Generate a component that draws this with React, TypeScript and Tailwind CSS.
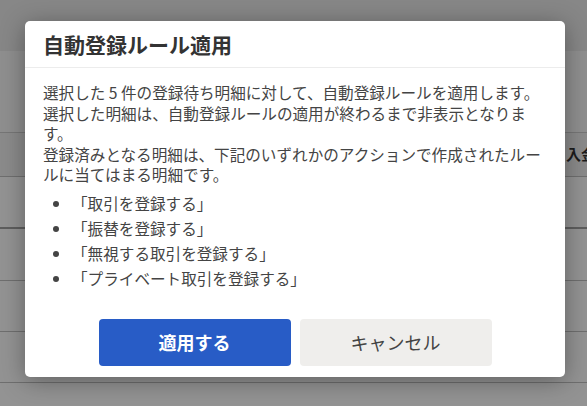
const bullets = [
  "「取引を登録する」",
  "「振替を登録する」",
  "「無視する取引を登録する」",
  "「プライベート取引を登録する」",
];

function BackgroundTable() {
  return (
    <div className="flex flex-col w-full">
      <div className="h-[51px] bg-[#878787]" />
      <div className="h-[82px] bg-[#8f8f8f] border-b border-[#767676]" />
      <div className="h-[44px] bg-[#8b8b8b] border-b border-[#6f6f6f] flex items-center overflow-hidden">
        <div className="w-[566px] shrink-0" />
        <span className="whitespace-nowrap text-[15px] font-bold text-[#1c1c1c]">入金</span>
      </div>
      <div className="h-[52px] bg-[#939393] border-b-2 border-[#5e5e5e]" />
      <div className="h-[52px] bg-[#939393] border-b border-[#6f6f6f]" />
      <div className="h-[51px] bg-[#939393] border-b border-[#6f6f6f]" />
      <div className="h-[51px] bg-[#939393] border-b border-[#6f6f6f]" />
      <div className="h-[23px] bg-[#939393]" />
    </div>
  );
}

function RuleDialog() {
  return (
    <div className="absolute left-[25px] top-[21px] w-[540px] h-[356px] bg-white rounded-[5px] shadow-[0_4px_24px_rgba(0,0,0,0.35)] flex flex-col">
      <div className="h-[47px] px-[18px] flex items-center border-b border-[#ececec] shrink-0">
        <h2 className="text-[21px] font-bold text-[#333333] leading-none">自動登録ルール適用</h2>
      </div>

      <div className="pl-[18px] pr-[16px] pt-[14px] text-[15.6px] leading-[20.5px] text-[#444444]">
        <p>
          選択した 5 件の登録待ち明細に対して、自動登録ルールを適用します。
          <br />
          選択した明細は、自動登録ルールの適用が終わるまで非表示となります。
          <br />
          登録済みとなる明細は、下記のいずれかのアクションで作成されたルールに当てはまる明細です。
        </p>
        <ul className="list-disc pl-[29px] mt-[6px]">
          {bullets.map((b) => (
            <li key={b} className="leading-[25px]">
              {b}
            </li>
          ))}
        </ul>
      </div>

      <div className="mt-auto pb-[11px] flex justify-center gap-[9px]">
        <button className="w-[192px] h-[47px] rounded-[4px] bg-[#285cc6] text-white text-[18px] font-bold">
          適用する
        </button>
        <button className="w-[192px] h-[47px] rounded-[4px] bg-[#efeeec] text-[#444444] text-[18px]">
          キャンセル
        </button>
      </div>
    </div>
  );
}

export default function App() {
  return (
    <main
      className="relative w-[587px] h-[406px] overflow-hidden"
      style={{ fontFamily: '"Noto Sans CJK JP", "Noto Sans", sans-serif' }}
    >
      <BackgroundTable />
      <RuleDialog />
    </main>
  );
}
